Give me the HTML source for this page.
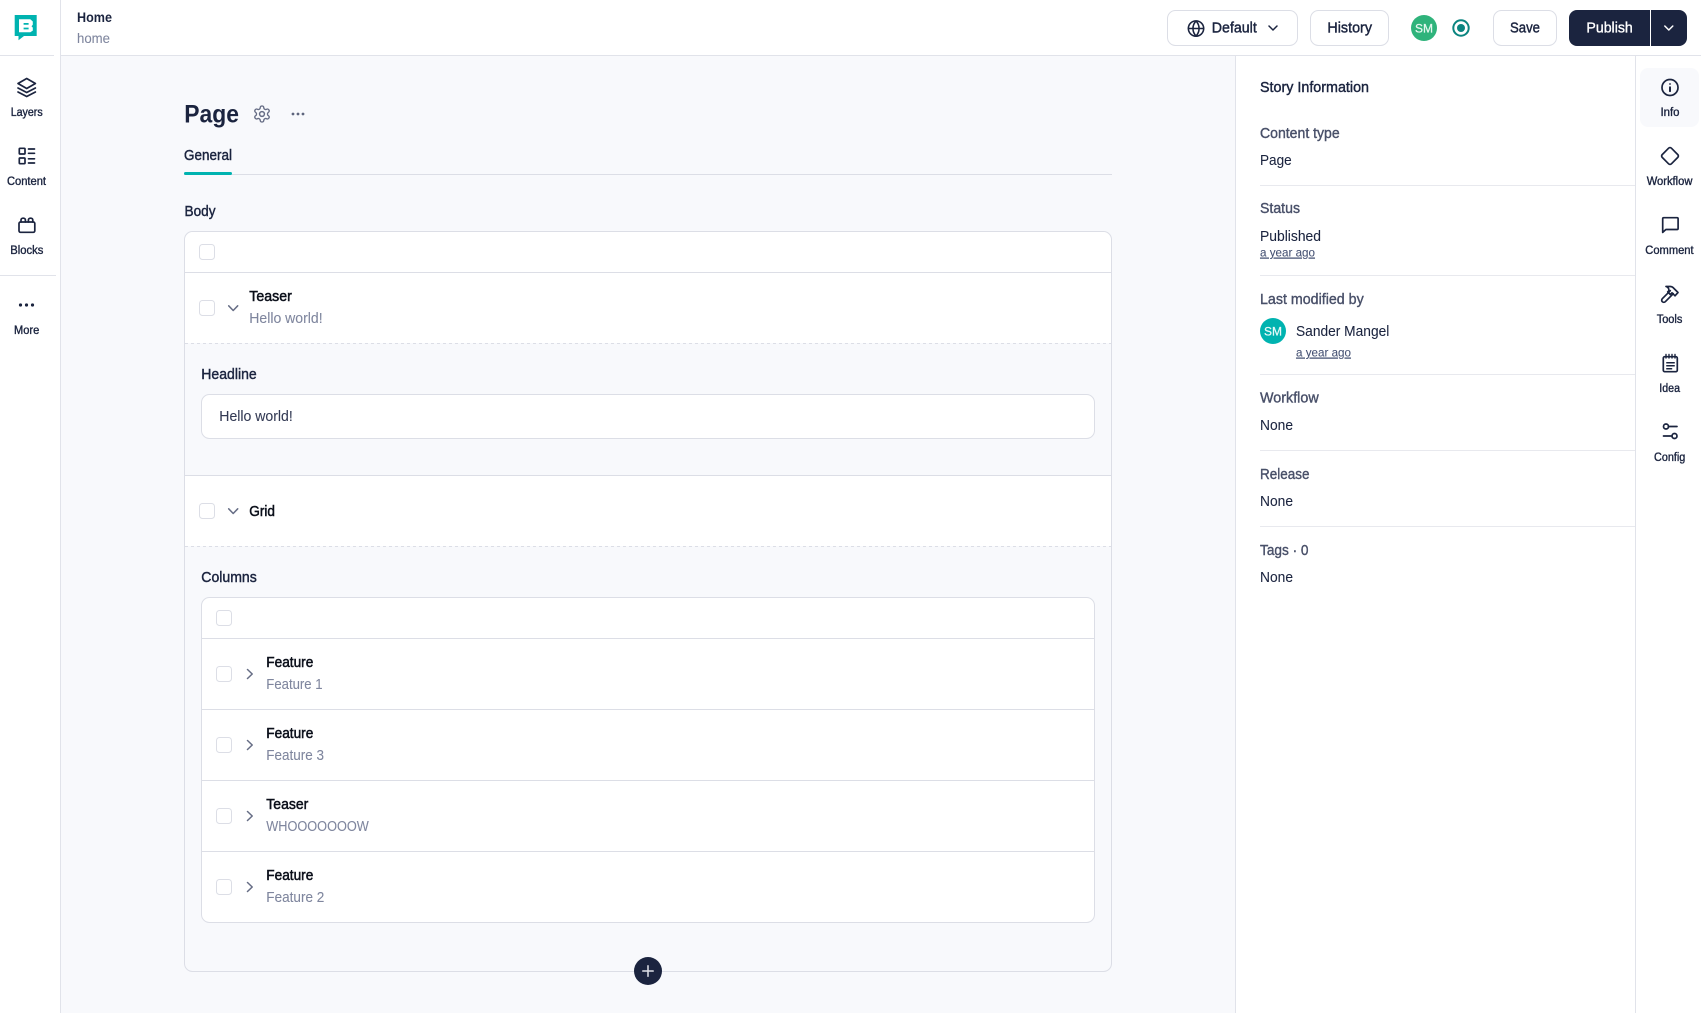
<!DOCTYPE html>
<html lang="en">
<head>
<meta charset="utf-8">
<title>Home</title>
<style>
html,body{margin:0;padding:0;background:#fff;width:1701px;height:1013px;overflow:hidden}
svg{display:block;position:absolute;left:0;top:0}
text{font-family:"Liberation Sans",Arial,sans-serif;font-size:14.600px;fill:#1b243f;stroke:#1b243f;stroke-width:.08px}
.m{stroke:#1b243f;stroke-width:.42px}
.s{font-size:11.500px;stroke:#1b243f;stroke-width:.36px}
.k{fill:#0b0f1a;stroke:#0b0f1a;stroke-width:.5px}
.g{fill:#7f869e;stroke:#7f869e;stroke-width:.08px}
.l{fill:#495069;stroke:#495069;stroke-width:.38px}
.u{font-size:12px;fill:#445072;stroke:#445072;stroke-width:.05px;text-decoration:underline}
.i{fill:none;stroke:#1b243f;stroke-width:1.700;stroke-linecap:round;stroke-linejoin:round}
.c{fill:none;stroke:#666d85;stroke-width:1.500;stroke-linecap:round;stroke-linejoin:round}
.b{fill:#fff;stroke:#dcdee6;stroke-width:1}
.cb{fill:#fff;stroke:#dcdee6;stroke-width:1}
</style>
</head>
<body>
<svg width="1701" height="1013" viewBox="0 0 1701 1013" xmlns="http://www.w3.org/2000/svg">
<!-- backgrounds -->
<rect width="1701" height="1013" fill="#fff"/>
<rect x="61" y="56" width="1174" height="957" fill="#f8f9fc"/>
<rect x="61" y="55" width="1640" height="1" fill="#e1e3ea"/>
<rect x="0" y="55" width="54" height="1" fill="#e1e3ea"/>
<rect x="60" y="0" width="1" height="1013" fill="#e1e3ea"/>
<rect x="0" y="275" width="56" height="1" fill="#e1e3ea"/>
<rect x="1235" y="56" width="1" height="957" fill="#e1e3ea"/>
<rect x="1635" y="56" width="1" height="957" fill="#e1e3ea"/>

<!-- logo -->
<path d="M14.700 15h22v21H24l-5.500 4.300V36h-3.800z" fill="#00b3b0"/>
<path d="M19 19.300h11.300l2.500 2.200v3.300l-1.300 1.400 1.300 1.400v3L30.300 32.300H19zM23.600 23v1.800h5V23zM23.600 27.600v1.800h5v-1.800z" fill="#fff" fill-rule="evenodd"/>

<!-- left rail icons -->
<g class="i">
<path d="M26.700 78.500l8.700 5-8.700 5-8.700-5z"/>
<path d="M18 88l8.700 4.500 8.700-4.500"/>
<path d="M18 92l8.700 4.500 8.700-4.500"/>
<rect x="19.300" y="148.300" width="5.700" height="5.700" rx=".8"/>
<rect x="19.300" y="158" width="5.700" height="5.700" rx=".8"/>
<path d="M28.500 149h6M28.500 153.300h6M28.500 158.800h6M28.500 163h6"/>
<rect x="19" y="222" width="15.800" height="10.300" rx="1.500"/>
<path d="M21 222v-2a1.800 1.800 0 0 1 1.800-1.800h.8a1.800 1.800 0 0 1 1.800 1.800v2M28.400 222v-2a1.800 1.800 0 0 1 1.800-1.800h.8a1.800 1.800 0 0 1 1.800 1.800v2"/>
</g>
<g fill="#1b243f"><circle cx="20.500" cy="305" r="1.600"/><circle cx="26.500" cy="305" r="1.600"/><circle cx="32.500" cy="305" r="1.600"/></g>
<text class="s" x="10.700" y="116" textLength="32" lengthAdjust="spacingAndGlyphs">Layers</text>
<text class="s" x="7" y="185" textLength="39" lengthAdjust="spacingAndGlyphs">Content</text>
<text class="s" x="10.300" y="254" textLength="33" lengthAdjust="spacingAndGlyphs">Blocks</text>
<text class="s" x="14" y="334" textLength="25.300" lengthAdjust="spacingAndGlyphs">More</text>

<!-- top bar left -->
<text x="77" y="22" style="font-size:13.500px;font-weight:700;stroke-width:0" textLength="35" lengthAdjust="spacingAndGlyphs">Home</text>
<text class="g" x="77" y="43" style="font-size:14px" textLength="33" lengthAdjust="spacingAndGlyphs">home</text>

<!-- top bar right -->
<rect class="b" x="1167.500" y="10.500" width="130" height="35" rx="8"/>
<rect class="b" x="1310.500" y="10.500" width="78" height="35" rx="8"/>
<rect class="b" x="1493.500" y="10.500" width="63" height="35" rx="8"/>
<g class="i" transform="translate(1187.500,20) scale(.71)" style="stroke-width:2.200"><circle cx="12" cy="12" r="10.800"/><path d="M12 1.500a15 15 0 0 0 0 21 15 15 0 0 0 0-21M1.500 12h21"/></g>
<text class="m" x="1211.800" y="32.500" textLength="45" lengthAdjust="spacingAndGlyphs">Default</text>
<path class="i" style="stroke-width:1.500" d="M1269 26l4 4 4-4"/>
<text class="m" x="1327.400" y="32.500" textLength="44.600" lengthAdjust="spacingAndGlyphs">History</text>
<circle cx="1424" cy="28" r="13" fill="#2fb37b"/>
<text x="1415" y="32.500" style="font-size:12px;fill:#e6f7ef;stroke:#e6f7ef;stroke-width:.25px" textLength="18" lengthAdjust="spacingAndGlyphs">SM</text>
<circle cx="1461" cy="28" r="7.700" fill="none" stroke="#0b8580" stroke-width="2"/>
<circle cx="1461" cy="28" r="4" fill="#0b8580"/>
<text class="m" x="1510" y="32.500" textLength="30" lengthAdjust="spacingAndGlyphs">Save</text>
<rect x="1569" y="10" width="118" height="36" rx="8" fill="#1b243f"/>
<rect x="1650" y="10" width="1" height="36" fill="#fff"/>
<text x="1586.400" y="32.500" style="fill:#fff;stroke:#fff;stroke-width:.35px" textLength="46.400" lengthAdjust="spacingAndGlyphs">Publish</text>
<path d="M1664.800 26l4 4 4-4" fill="none" stroke="#fff" stroke-width="1.500" stroke-linecap="round" stroke-linejoin="round"/>

<!-- heading -->
<text x="184.300" y="122.500" style="font-size:25px;font-weight:700;stroke-width:0" textLength="54.700" lengthAdjust="spacingAndGlyphs">Page</text>
<path class="c" transform="translate(252.400,104.400) scale(.8)" style="stroke-width:1.700" d="M12.220 2h-.44a2 2 0 0 0-2 2v.18a2 2 0 0 1-1 1.730l-.43.250a2 2 0 0 1-2 0l-.15-.08a2 2 0 0 0-2.730.730l-.22.380a2 2 0 0 0 .730 2.730l.15.100a2 2 0 0 1 1 1.720v.510a2 2 0 0 1-1 1.740l-.15.090a2 2 0 0 0-.730 2.730l.22.380a2 2 0 0 0 2.730.730l.15-.08a2 2 0 0 1 2 0l.43.250a2 2 0 0 1 1 1.730V20a2 2 0 0 0 2 2h.44a2 2 0 0 0 2-2v-.18a2 2 0 0 1 1-1.730l.43-.25a2 2 0 0 1 2 0l.15.080a2 2 0 0 0 2.730-.73l.22-.39a2 2 0 0 0-.73-2.730l-.15-.08a2 2 0 0 1-1-1.740v-.5a2 2 0 0 1 1-1.740l.15-.09a2 2 0 0 0 .73-2.730l-.22-.38a2 2 0 0 0-2.730-.73l-.15.080a2 2 0 0 1-2 0l-.43-.25a2 2 0 0 1-1-1.730V4a2 2 0 0 0-2-2z"/>
<circle class="c" cx="262" cy="114" r="2.400"/>
<g fill="#5e657d"><circle cx="293" cy="114" r="1.400"/><circle cx="298" cy="114" r="1.400"/><circle cx="303" cy="114" r="1.400"/></g>
<text class="m" x="184" y="160" textLength="48" lengthAdjust="spacingAndGlyphs">General</text>
<rect x="184" y="174" width="928" height="1" fill="#dcdee6"/>
<rect x="184" y="172" width="48" height="3" rx="1.500" fill="#00b3b0"/>
<text class="m" x="184.500" y="216" textLength="31" lengthAdjust="spacingAndGlyphs">Body</text>

<!-- outer field box -->
<rect x="184.500" y="231.500" width="927" height="740" rx="8" fill="#f8f9fc" stroke="#dcdee6"/>
<path d="M185 343V240a8 8 0 0 1 8-8h910a8 8 0 0 1 8 8V343z" fill="#fff"/>
<rect x="185" y="476" width="926" height="70" fill="#fff"/>
<rect x="185" y="272" width="926" height="1" fill="#dcdee6"/>
<line x1="185" y1="343.500" x2="1111" y2="343.500" stroke="#dcdee6" stroke-dasharray="3 3"/>
<rect x="185" y="475" width="926" height="1" fill="#dcdee6"/>
<line x1="185" y1="546.500" x2="1111" y2="546.500" stroke="#dcdee6" stroke-dasharray="3 3"/>

<rect class="cb" x="199.500" y="244.500" width="15" height="15" rx="3"/>
<rect class="cb" x="199.500" y="300.500" width="15" height="15" rx="3"/>
<path class="c" d="M228.700 305.800l4.500 4.700 4.500-4.700"/>
<text class="k" x="249.300" y="301" textLength="42.500" lengthAdjust="spacingAndGlyphs">Teaser</text>
<text class="g" x="249.300" y="323" textLength="73.300" lengthAdjust="spacingAndGlyphs">Hello world!</text>

<text class="m" x="201.300" y="379" textLength="55.400" lengthAdjust="spacingAndGlyphs">Headline</text>
<rect class="b" x="201.500" y="394.500" width="893" height="44" rx="8"/>
<text x="219.300" y="421" textLength="73.500" lengthAdjust="spacingAndGlyphs" style="fill:#333a54;stroke:#333a54">Hello world!</text>

<rect class="cb" x="199.500" y="503.500" width="15" height="15" rx="3"/>
<path class="c" d="M228.700 508.800l4.500 4.700 4.500-4.700"/>
<text class="k" x="249.300" y="516" textLength="25.700" lengthAdjust="spacingAndGlyphs">Grid</text>

<text class="m" x="201.300" y="582" textLength="55.500" lengthAdjust="spacingAndGlyphs">Columns</text>

<!-- inner box -->
<rect x="201.500" y="597.500" width="893" height="325" rx="8" fill="#fff" stroke="#dcdee6"/>
<rect x="202" y="638" width="892" height="1" fill="#dcdee6"/>
<rect x="202" y="709" width="892" height="1" fill="#dcdee6"/>
<rect x="202" y="780" width="892" height="1" fill="#dcdee6"/>
<rect x="202" y="851" width="892" height="1" fill="#dcdee6"/>
<rect class="cb" x="216.500" y="610.500" width="15" height="15" rx="3"/>
<rect class="cb" x="216.500" y="666.500" width="15" height="15" rx="3"/>
<rect class="cb" x="216.500" y="737.500" width="15" height="15" rx="3"/>
<rect class="cb" x="216.500" y="808.500" width="15" height="15" rx="3"/>
<rect class="cb" x="216.500" y="879.500" width="15" height="15" rx="3"/>
<path class="c" d="M247.500 669.500l4.700 4.500-4.700 4.500M247.500 740.500l4.700 4.500-4.700 4.500M247.500 811.500l4.700 4.500-4.700 4.500M247.500 882.500l4.700 4.500-4.700 4.500"/>
<text class="k" x="266.300" y="667" textLength="47" lengthAdjust="spacingAndGlyphs">Feature</text>
<text class="g" x="266.300" y="689" textLength="56.300" lengthAdjust="spacingAndGlyphs">Feature 1</text>
<text class="k" x="266.300" y="738" textLength="47" lengthAdjust="spacingAndGlyphs">Feature</text>
<text class="g" x="266.300" y="760" textLength="57.700" lengthAdjust="spacingAndGlyphs">Feature 3</text>
<text class="k" x="266.300" y="809" textLength="42" lengthAdjust="spacingAndGlyphs">Teaser</text>
<text class="g" x="266.300" y="831" textLength="102.500" lengthAdjust="spacingAndGlyphs">WHOOOOOOOW</text>
<text class="k" x="266.300" y="880" textLength="47" lengthAdjust="spacingAndGlyphs">Feature</text>
<text class="g" x="266.300" y="902" textLength="58" lengthAdjust="spacingAndGlyphs">Feature 2</text>

<!-- plus -->
<circle cx="648" cy="971" r="14" fill="#1b243f"/>
<path d="M642.800 971h10.400M648 965.800v10.400" stroke="#dfe1e8" stroke-width="1.500" stroke-linecap="round"/>

<!-- info panel -->
<text class="m" x="1260" y="92" textLength="109" lengthAdjust="spacingAndGlyphs">Story Information</text>
<text class="l" x="1260" y="138" textLength="79.700" lengthAdjust="spacingAndGlyphs">Content type</text>
<text x="1260" y="165" textLength="31.700" lengthAdjust="spacingAndGlyphs">Page</text>
<rect x="1260" y="185" width="375" height="1" fill="#e8e9ee"/>
<text class="l" x="1260" y="213" textLength="40" lengthAdjust="spacingAndGlyphs">Status</text>
<text x="1260" y="241" textLength="61" lengthAdjust="spacingAndGlyphs">Published</text>
<text class="u" x="1260" y="256.500" textLength="55" lengthAdjust="spacingAndGlyphs">a year ago</text>
<rect x="1260" y="275" width="375" height="1" fill="#e8e9ee"/>
<text class="l" x="1260" y="304" textLength="103.700" lengthAdjust="spacingAndGlyphs">Last modified by</text>
<circle cx="1273" cy="331" r="13" fill="#00b3b0"/>
<text x="1264" y="335.500" style="font-size:12px;fill:#e8f9f8;stroke:#e8f9f8;stroke-width:.25px" textLength="18" lengthAdjust="spacingAndGlyphs">SM</text>
<text x="1296" y="336" textLength="93.300" lengthAdjust="spacingAndGlyphs">Sander Mangel</text>
<text class="u" x="1296" y="356.500" textLength="55" lengthAdjust="spacingAndGlyphs">a year ago</text>
<rect x="1260" y="374" width="375" height="1" fill="#e8e9ee"/>
<text class="l" x="1260" y="402.500" textLength="58.700" lengthAdjust="spacingAndGlyphs">Workflow</text>
<text x="1260" y="430" textLength="33" lengthAdjust="spacingAndGlyphs">None</text>
<rect x="1260" y="450" width="375" height="1" fill="#e8e9ee"/>
<text class="l" x="1260" y="479" textLength="49.500" lengthAdjust="spacingAndGlyphs">Release</text>
<text x="1260" y="506" textLength="33" lengthAdjust="spacingAndGlyphs">None</text>
<rect x="1260" y="526" width="375" height="1" fill="#e8e9ee"/>
<text class="l" x="1260" y="555" textLength="48.500" lengthAdjust="spacingAndGlyphs">Tags · 0</text>
<text x="1260" y="582" textLength="33" lengthAdjust="spacingAndGlyphs">None</text>

<!-- right rail -->
<rect x="1640" y="68" width="59" height="59" rx="8" fill="#f8f9fc"/>
<g class="i">
<circle cx="1670" cy="87.500" r="8"/>
<path d="M1670 87.300v3.800" stroke-width="2"/>
<circle cx="1670" cy="84" r=".9" fill="#1b243f" stroke="none"/>
<path d="M1668.600 148.200a2 2 0 0 1 2.800 0l6.400 6.400a2 2 0 0 1 0 2.800l-6.400 6.400a2 2 0 0 1-2.800 0l-6.400-6.400a2 2 0 0 1 0-2.800z"/>
<path d="M1662.700 218.700a1 1 0 0 1 1-1h13.400a1 1 0 0 1 1 1v9.800a1 1 0 0 1-1 1h-11.200l-3.200 2.900z"/>
<path d="M1670.300 290.700l-8 8a1.800 1.800 0 0 0 3 3l8-8"/>
<path d="M1666.500 286.500h4q1.500 0 2.500 1l5 5-3 3.300-3-3-1.700 1.700-2.600-2.600 1.200-1.200q.3-3.200-2.900-4.200z"/>
<rect x="1663.300" y="356.700" width="14" height="15" rx="1.500"/>
<path d="M1666 354.500v3.500M1669 354.500v3.500M1672 354.500v3.500M1675 354.500v3.500" stroke-width="1.400"/>
<path d="M1666.800 362.800h7.400M1666.800 365.800h7.400M1666.800 368.800h4.800" stroke-width="1.500"/>
<circle cx="1666" cy="426.500" r="2.500"/>
<circle cx="1674.500" cy="436" r="2.500"/>
<path d="M1668.500 426.500h8.500M1663.500 436h8.500"/>
</g>
<text class="s" x="1660.500" y="116" textLength="19" lengthAdjust="spacingAndGlyphs">Info</text>
<text class="s" x="1646.700" y="185" textLength="45.700" lengthAdjust="spacingAndGlyphs">Workflow</text>
<text class="s" x="1645.300" y="254" textLength="48.300" lengthAdjust="spacingAndGlyphs">Comment</text>
<text class="s" x="1656.700" y="323" textLength="25.700" lengthAdjust="spacingAndGlyphs">Tools</text>
<text class="s" x="1659.300" y="392" textLength="20.700" lengthAdjust="spacingAndGlyphs">Idea</text>
<text class="s" x="1654" y="461" textLength="31.300" lengthAdjust="spacingAndGlyphs">Config</text>
</svg>
</body>
</html>
